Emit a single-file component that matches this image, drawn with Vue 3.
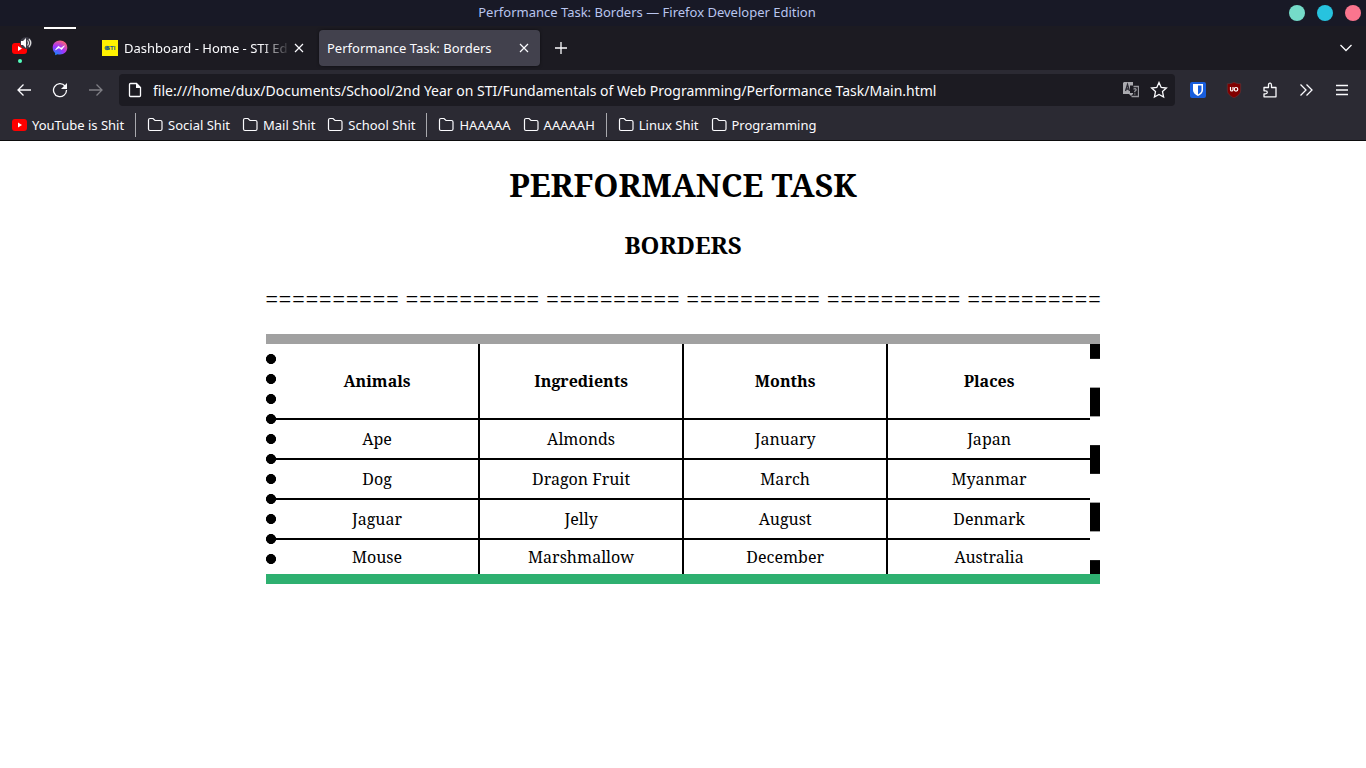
<script setup>
import { ref } from 'vue'

const address = ref('file:///home/dux/Documents/School/2nd Year on STI/Fundamentals of Web Programming/Performance Task/Main.html')

const bookmarkGroups = [
  [{ label: 'YouTube is Shit', icon: 'youtube' }],
  [{ label: 'Social Shit' }, { label: 'Mail Shit' }, { label: 'School Shit' }],
  [{ label: 'HAAAAA' }, { label: 'AAAAAH' }],
  [{ label: 'Linux Shit' }, { label: 'Programming' }],
]

const headings = ['Animals', 'Ingredients', 'Months', 'Places']
const rows = [
  ['Ape', 'Almonds', 'January', 'Japan'],
  ['Dog', 'Dragon Fruit', 'March', 'Myanmar'],
  ['Jaguar', 'Jelly', 'August', 'Denmark'],
  ['Mouse', 'Marshmallow', 'December', 'Australia'],
]
const divider = Array(6).fill('='.repeat(10)).join(' ')
</script>

<template>
  <div class="window">
    <header class="titlebar">
      <span class="window-title">Performance Task: Borders — Firefox Developer Edition</span>
      <div class="window-buttons">
        <button class="dot mint" aria-label="Minimize"></button>
        <button class="dot cyan" aria-label="Maximize"></button>
        <button class="dot pink" aria-label="Close window"></button>
      </div>
    </header>

    <nav class="tabs" aria-label="Tabs">
      <button class="pinned" aria-label="YouTube, playing audio">
        <svg width="26" height="30" viewBox="0 0 26 30">
          <rect x="5" y="10" width="15" height="11" rx="3" fill="#f00" />
          <path d="M11 13v5l4-2.500z" fill="#fff" />
          <circle cx="19" cy="10" r="6" fill="#3c3b46" />
          <path d="M14 8h2l3-3v10l-3-3h-2z" fill="#fff" />
          <path d="M20.500 7.500q2 2.500 0 5M22 6q3.500 4 0 8" fill="none" stroke="#ddd" stroke-width="1.200" />
          <circle cx="13" cy="28" r="2" fill="#54ffbd" />
        </svg>
      </button>
      <button class="pinned marked" aria-label="Messenger">
        <svg width="16" height="16" viewBox="0 0 16 16">
          <defs>
            <radialGradient id="messenger" cx=".2" cy="1" r="1.100">
              <stop offset="0" stop-color="#0a8cff" />
              <stop offset=".55" stop-color="#a033ff" />
              <stop offset="1" stop-color="#ff6470" />
            </radialGradient>
          </defs>
          <path d="M8 .5C3.700.5.700 3.600.700 7.700c0 2.200.9 4 2.400 5.300l.1 2.300 2.300-1c.8.2 1.600.3 2.500.3 4.300 0 7.300-3 7.300-7S12.300.5 8 .5z" fill="url(#messenger)" />
          <path d="M3.500 9.800 6.300 6.300 9 8.200l3.400-2.400L9.700 9.600 7 7.700z" fill="#fff" stroke="#fff" stroke-width=".7" />
        </svg>
      </button>
      <div class="tab first">
        <svg class="favicon" width="16" height="16" viewBox="0 0 16 16">
          <path d="M0 0h16v16H0z" fill="#fff200" />
          <ellipse cx="5" cy="8" rx="2.500" ry="2.300" fill="#50834f" />
          <text x="4" y="10" font-family="Liberation Sans, sans-serif" font-size="6" font-weight="700" fill="#17569b">STI</text>
        </svg>
        <span class="tab-label fading">Dashboard - Home - STI Ed</span>
        <button class="tab-close" aria-label="Close tab">
          <svg width="10" height="10" viewBox="0 0 10 10"><path d="m1 1 8 8M9 1 1 9" /></svg>
        </button>
      </div>
      <div class="tab active">
        <span class="tab-label">Performance Task: Borders</span>
        <button class="tab-close" aria-label="Close tab">
          <svg width="10" height="10" viewBox="0 0 10 10"><path d="m1 1 8 8M9 1 1 9" /></svg>
        </button>
      </div>
      <button class="tool" aria-label="New tab">
        <svg width="14" height="14" viewBox="0 0 14 14"><path d="M7 1v12M1 7h12" /></svg>
      </button>
      <button class="tool all-tabs" aria-label="List all tabs">
        <svg width="14" height="14" viewBox="0 0 14 14"><path d="m1.500 4 5.500 5.500L12.500 4" /></svg>
      </button>
    </nav>

    <div class="toolbar">
      <button class="tool" aria-label="Back">
        <svg width="16" height="16" viewBox="0 0 16 16"><path d="M15 8H2M7.500 2.500 2 8l5.500 5.500" /></svg>
      </button>
      <button class="tool" aria-label="Reload">
        <svg width="16" height="16" viewBox="0 0 16 16"><path d="M13 4a6.500 6.500 0 1 0 1.500 4" /><path d="M15 1v6H9z" fill="currentColor" stroke="none" /></svg>
      </button>
      <button class="tool" aria-label="Forward" disabled>
        <svg width="16" height="16" viewBox="0 0 16 16"><path d="M1 8h13M8.500 2.500 14 8l-5.500 5.500" /></svg>
      </button>
      <div class="urlbar">
        <svg width="16" height="16" viewBox="0 0 16 16"><path d="M3.500 1.500h6l4 4v8q0 1-1 1h-9q-1 0-1-1v-11q0-1 1-1z" /><path d="M9 1v5h5z" fill="currentColor" stroke="none" /></svg>
        <input v-model="address" aria-label="Address" spellcheck="false" />
        <button class="inline-tool" aria-label="Translate page">
          <svg width="16" height="16" viewBox="0 0 16 16">
            <path d="M1 0h9v3.500H7V11h3v1l-2 2-2-2H0V1z" fill="#a9a9ae" stroke="none" />
            <path d="M2.500 9 4.500 2.500 6.500 9M3 7h3" stroke="#2b2a33" />
            <path d="M10.500 4.500h5v10h-7" stroke="#97979d" />
            <path d="M10.500 7.200q1.700-1.200 2.600.1.500 1-1.300 2v1M11.800 11.500v1" stroke="#97979d" />
          </svg>
        </button>
        <button class="inline-tool" aria-label="Bookmark this page">
          <svg width="18" height="18" viewBox="0 0 18 18"><path d="m9 1.500 2.200 4.900 5.200.6-3.900 3.600 1.100 5.400L9 13.500 4.400 16l1.100-5.400L1.600 7l5.200-.6z" /></svg>
        </button>
      </div>
      <button class="tool" aria-label="Bitwarden">
        <svg width="16" height="16" viewBox="0 0 16 16">
          <rect width="16" height="16" rx="2" fill="#175ddc" stroke="none" />
          <path d="M3 2h10v6c0 3-2.500 4.700-5 6-2.500-1.300-5-3-5-6z" fill="#fff" stroke="none" />
          <path d="M8 3.500h3.500V8c0 2-1.500 3.300-3.500 4.500z" fill="#175ddc" stroke="none" />
        </svg>
      </button>
      <button class="tool" aria-label="uBlock Origin">
        <svg width="16" height="16" viewBox="0 0 16 16">
          <path d="M8 0c2.200 1.500 4 1.700 6.700 1.700V8c0 4-2.700 5.800-6.700 8-4-2.200-6.700-4-6.700-8V1.700C4 1.700 5.800 1.500 8 0z" fill="#800000" stroke="#5d3a40" stroke-width=".6" />
          <path d="M4.500 5v2.700q0 1.300 1.200 1.300T7 7.700V5" stroke="#fff" stroke-width="1.200" />
          <circle cx="10" cy="7.300" r="1.800" stroke="#fff" stroke-width="1.200" />
        </svg>
      </button>
      <button class="tool" aria-label="Extensions">
        <svg width="16" height="16" viewBox="0 0 16 16"><path d="M2 5.500h4.500V3.200q0-2 1.500-2t1.500 2v2.300H14v9.300H2v-3h1.500q1.800 0 1.800-1.500T3.500 8.800H2z" stroke-linejoin="round" /></svg>
      </button>
      <button class="tool" aria-label="More tools">
        <svg width="14" height="14" viewBox="0 0 14 14"><path d="m1.500 1.500 5.500 5.500-5.500 5.500M7.500 1.500 13 7l-5.500 5.500" /></svg>
      </button>
      <button class="tool" aria-label="Open application menu">
        <svg width="14" height="14" viewBox="0 0 14 14"><path d="M1 2.500h12M1 7h12M1 11.500h12" /></svg>
      </button>
    </div>

    <nav class="bookmarks" aria-label="Bookmarks">
      <div v-for="(group, g) in bookmarkGroups" :key="g" class="bookmark-group">
        <a v-for="item in group" :key="item.label" href="#" class="bookmark">
          <svg v-if="item.icon" width="16" height="16" viewBox="0 0 16 16"><rect x="1" y="2" width="15" height="12" rx="3" fill="#f00" stroke="none" /><path d="M7 5.500v5L11 8z" fill="#fff" stroke="none" /></svg>
          <svg v-else width="16" height="16" viewBox="0 0 16 16"><path d="M1.500 3q0-1.500 1.500-1.500h3l2 2h5.500q1.500 0 1.500 1.500v7q0 1.500-1.500 1.500H3q-1.500 0-1.500-1.500z" /></svg>
          {{ item.label }}
        </a>
      </div>
    </nav>

    <main class="page">
      <h1>PERFORMANCE TASK</h1>
      <h2>BORDERS</h2>
      <p class="divider">{{ divider }}</p>
      <div class="frame">
        <table>
          <thead>
            <tr><th v-for="heading in headings" :key="heading" scope="col">{{ heading }}</th></tr>
          </thead>
          <tbody>
            <tr v-for="row in rows" :key="row[0]">
              <td v-for="cell in row" :key="cell">{{ cell }}</td>
            </tr>
          </tbody>
        </table>
      </div>
    </main>
  </div>
</template>

<style>
body {
  margin: 0;
  background: #fff;
}
</style>

<style scoped>
.window {
  font: 13px/20px "Noto Sans", sans-serif;
  color: #fbfbfe;
}
button {
  padding: 0;
  border: 0;
  background: none;
  color: inherit;
  font: inherit;
}
svg {
  display: block;
  flex: none;
  fill: none;
  stroke: currentColor;
  stroke-width: 1.3;
}
.pinned svg,
.favicon {
  stroke: none;
}
.titlebar {
  display: flex;
  align-items: center;
  height: 26px;
  padding: 0 5px;
  background: #181926;
}
.window-title {
  flex: 1;
  padding-bottom: 2px;
  color: #b9c5ee;
  text-align: center;
}
.window-buttons {
  display: flex;
  gap: 12px;
}
.dot {
  width: 16px;
  height: 16px;
  border-radius: 50%;
}
.mint { background: #75dbc9; }
.cyan { background: #27c3df; }
.pink { background: #fa758e; }
.tabs {
  display: flex;
  align-items: center;
  height: 44px;
  background: #1c1b22;
}
.pinned {
  display: grid;
  place-items: center;
  width: 40px;
  height: 44px;
  flex: none;
}
.marked {
  background: linear-gradient(#fff, #fff) center 1px / 32px 2px no-repeat;
}
.tab {
  display: flex;
  align-items: center;
  box-sizing: border-box;
  width: 221px;
  height: 36px;
  padding: 0 8px;
  border-radius: 4px;
}
.tab.first {
  margin: 0 4px 0 14px;
}
.tab.active {
  margin-right: 3px;
  background: #42414d;
  box-shadow: 0 0 3px #0008;
}
.favicon {
  margin-right: 6px;
}
.tab-label {
  flex: 1;
  white-space: nowrap;
}
.fading {
  mask-image: linear-gradient(to right, #000 82%, transparent);
}
.tab-close {
  display: grid;
  place-items: center;
  width: 16px;
  height: 16px;
  flex: none;
}
.tab-close svg,
.bookmark svg {
  stroke-width: 1.2;
}
.tool {
  display: grid;
  place-items: center;
  width: 36px;
  height: 36px;
  flex: none;
}
.tool:disabled {
  opacity: .4;
}
.all-tabs {
  margin: 0 2px 0 auto;
}
.toolbar {
  display: flex;
  align-items: center;
  height: 40px;
  padding: 0 6px;
  background: #2b2a33;
}
.urlbar {
  display: flex;
  align-items: center;
  flex: 1;
  min-width: 0;
  height: 32px;
  margin: 0 5px;
  padding: 0 7px 0 8px;
  border-radius: 4px;
  background: #1c1b22;
}
.urlbar input {
  flex: 1;
  min-width: 0;
  height: 24px;
  margin-left: 10px;
  padding: 2px 0 0;
  border: 0;
  outline: 0;
  background: none;
  color: inherit;
  font: 14px/24px "Noto Sans", sans-serif;
}
.inline-tool {
  margin-left: 11px;
}
.bookmarks {
  display: flex;
  align-items: center;
  height: 30px;
  padding-left: 11px;
  border-bottom: 1px solid #0c0c0d;
  background: #2b2a33;
}
.bookmark-group {
  display: flex;
  align-items: center;
  gap: 12px;
  height: 24px;
}
.bookmark-group + .bookmark-group {
  margin-left: 11px;
  padding-left: 11px;
  border-left: 1px solid #a9a9ae;
}
.bookmark {
  display: flex;
  align-items: center;
  gap: 5px;
  color: inherit;
  text-decoration: none;
  white-space: nowrap;
}
.page {
  padding: 22px 266px;
  color: #000;
  font: 16px/22px "Noto Serif", "DejaVu Serif Condensed", serif;
  text-align: center;
}
h1 {
  margin: 0 0 21px;
  font-size: 32px;
  line-height: 44px;
}
h2 {
  margin: 0 0 21px;
  font-size: 24px;
  line-height: 33px;
}
.divider {
  display: flex;
  justify-content: center;
  margin: 0 0 19px;
  font-size: 24px;
  line-height: 33px;
  white-space: nowrap;
}
.frame {
  padding: 0 10px;
  border: 0 solid #a1a1a1;
  border-width: 10px 0;
  border-bottom-color: #2eb070;
  background:
    radial-gradient(circle at 5px 5px, #000 4.700px, transparent 5.300px) 0 10px / 10px 20px repeat-y,
    linear-gradient(#000 25%, transparent 25% 75%, #000 75%) right top / 10px 25% repeat-y;
}
table {
  width: 100%;
  table-layout: fixed;
  border-spacing: 0;
}
th,
td {
  height: 38px;
  padding: 0;
  border-right: 2px solid #000;
  border-bottom: 2px solid #000;
}
th {
  box-sizing: border-box;
  width: 25.07%;
  height: 76px;
}
th:last-child,
td:last-child {
  width: auto;
  border-right: 0;
}
tbody tr:last-child td {
  height: 34px;
  border-bottom: 0;
}
</style>
